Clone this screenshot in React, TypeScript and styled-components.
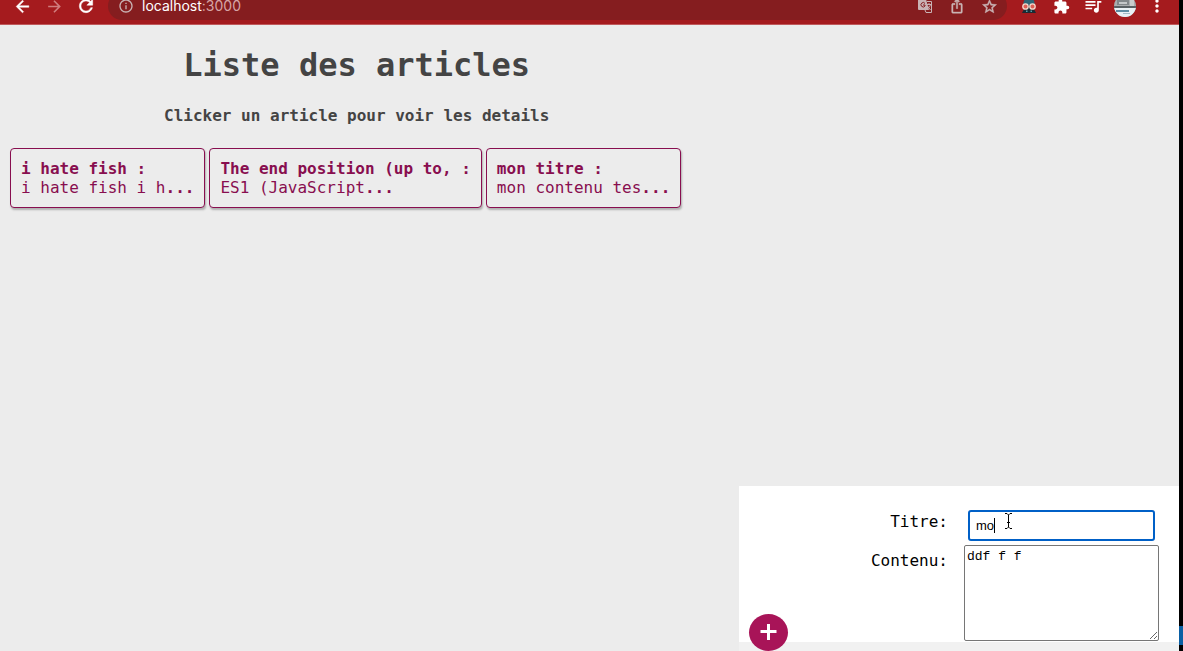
import React, { useState } from "react";
import styled, { createGlobalStyle } from "styled-components";
import {
  MdArrowBack,
  MdArrowForward,
  MdExtension,
  MdInfoOutline,
  MdIosShare,
  MdMoreVert,
  MdQueueMusic,
  MdRefresh,
  MdStarBorder,
} from "react-icons/md";

const mono = '"DejaVu Sans Mono", monospace';

const GlobalStyle = createGlobalStyle`
  * { box-sizing: border-box; }
  body {
    margin: 0;
    background: #ececec;
    font: 16px/19px ${mono};
  }
`;

const Screen = styled.div`
  display: flex;
  min-height: 100vh;
`;

const Browser = styled.div`
  flex: 1;
  min-width: 0;
  display: flex;
  flex-direction: column;
`;

const Desktop = styled.div`
  width: 4px;
  background: linear-gradient(to top, #000 6px, #0a5fa3 6px, #0a5fa3 25px, #000 25px);
`;

const Toolbar = styled.header`
  display: flex;
  align-items: flex-end;
  gap: 6px;
  height: 25px;
  padding: 0 6px 4px;
  background: #a51b1e;
  border-bottom: 1px solid #c0595b;
`;

const ToolGroup = styled.div`
  display: flex;
  align-items: center;
  height: 28px;
`;

const ToolButton = styled.button<{ $color?: string; $bold?: boolean }>`
  display: flex;
  align-items: center;
  justify-content: center;
  width: 32px;
  height: 28px;
  padding: 0;
  border: 0;
  background: none;
  color: ${(p) => p.$color ?? "#fff"};

  svg {
    stroke-width: ${(p) => (p.$bold ? 0.6 : 0)};
  }

  svg > path[fill="none"] {
    stroke: none;
  }
`;

const AddressBar = styled.div`
  flex: 1;
  display: flex;
  align-items: center;
  height: 28px;
  padding: 0 2px 0 10px;
  gap: 8px;
  border-radius: 14px;
  background: #851d1f;
  color: #c9b3b4;
`;

const Url = styled.div`
  flex: 1;
  font: 14px/12px Inter, sans-serif;
  color: #d7a5a6;
`;

const Host = styled.span`
  color: #fff;
`;

const Articles = styled.main`
  width: calc(60% - 14px);
  margin-left: 10px;
  padding-top: 20px;
  color: #444;
`;

const Title = styled.h1`
  margin: 0;
  font-size: 32px;
  line-height: 40px;
  text-align: center;
`;

const Subtitle = styled.h2`
  margin: 21px 0 23px;
  font-size: 16px;
  line-height: 19px;
  text-align: center;
`;

const CardList = styled.div`
  display: flex;
  flex-wrap: wrap;
  gap: 4px;
`;

const Card = styled.button`
  padding: 10px;
  border: 1px solid #880e4f;
  border-radius: 4px;
  box-shadow: 1px 2px 2px #b0b0b0;
  background: #ececec;
  color: #880e4f;
  font: 16px/19px ${mono};
  text-align: left;
`;

const CardTitle = styled.strong`
  display: block;
`;

const Editor = styled.form`
  position: relative;
  width: 440px;
  margin: auto 0 0 auto;
  padding-bottom: 9px;
  background: #f1f1f1;
`;

const Fields = styled.div`
  display: grid;
  grid-template-columns: 1fr 195px;
  column-gap: 16px;
  row-gap: 4px;
  padding: 24px 20px 1px 0;
  background: #fff;
`;

const Label = styled.label<{ $top: number }>`
  padding-top: ${(p) => p.$top}px;
  text-align: right;
  color: #000;
`;

const InputWrap = styled.div`
  position: relative;
  padding: 0 4px;
`;

const TextInput = styled.input`
  display: block;
  width: 100%;
  height: 31px;
  padding: 0 6px;
  border: 2px solid #0060c7;
  border-radius: 3px;
  outline: none;
  background: #fff;
  color: #000;
  font: 13px "Liberation Sans", Arial, sans-serif;
`;

const Caret = styled.span`
  position: absolute;
  left: 30px;
  top: 8px;
  width: 1px;
  height: 15px;
  background: #000;
`;

const Pointer = styled.svg`
  position: absolute;
  left: 40px;
  top: 3px;
`;

const TextArea = styled.textarea`
  display: block;
  width: 100%;
  height: 96px;
  padding: 3px 2px;
  border: 1px solid #767676;
  border-radius: 2px;
  background: #fff;
  color: #000;
  font: 13px/16px "Liberation Mono", monospace;
`;

const AddButton = styled.button`
  position: absolute;
  left: 10px;
  bottom: 0;
  display: grid;
  place-items: center;
  width: 39px;
  height: 37px;
  padding: 0;
  border: 0;
  border-radius: 50%;
  background: #a81458;
`;

const articles = [
  { title: "i hate fish", excerpt: "i hate fish i h" },
  { title: "The end position (up to,", excerpt: "ES1 (JavaScript" },
  { title: "mon titre", excerpt: "mon contenu tes" },
];

const TranslateIcon = () => (
  <svg width="14" height="14" viewBox="0 0 14 14" aria-hidden="true">
    <path d="M1 0h7l3 11H1a1 1 0 0 1-1-1V1a1 1 0 0 1 1-1z" fill="#c9b3b4" />
    <g fill="none" strokeWidth="1">
      <path d="M7 4.500A2.200 2.200 0 1 0 7 7V6H5" stroke="#851d1f" />
      <path
        d="M9 2.500h4.500v11H8L7 11M9 5.500h4M11 4v1.500M12.500 5.500c-.5 2-1.500 3-3 4M9.500 7l3 4"
        stroke="#c9b3b4"
      />
    </g>
  </svg>
);

const HelmetIcon = () => (
  <svg width="16" height="20" viewBox="0 0 16 20" aria-hidden="true">
    <path d="M2.500 10V7a5.500 5.500 0 0 1 11 0v3z" fill="#2f6575" />
    <path d="M3 9h10v4l2 4H1l2-4z" fill="#1c2b33" />
    <circle cx="4.500" cy="10.500" r="2.700" fill="#dd5f55" stroke="#f4d9cd" strokeWidth="1.300" />
    <circle cx="11.500" cy="10.500" r="2.700" fill="#dd5f55" stroke="#f4d9cd" strokeWidth="1.300" />
    <path d="M5 14.500h1.500V16H5zM9.500 14.500H11V16H9.500z" fill="#58a0ad" />
  </svg>
);

const Avatar = () => (
  <svg width="22" height="22" viewBox="0 0 22 22" aria-hidden="true">
    <clipPath id="avatar">
      <circle cx="11" cy="11" r="11" />
    </clipPath>
    <g clipPath="url(#avatar)">
      <path d="M0 0h22v22H0z" fill="#a9adaf" />
      <path d="M3 5h12v5H3z" fill="#81878a" />
      <path d="M5 7h8v2H5z" fill="#c3c7c9" />
      <path d="M16 4h4v7h-4z" fill="#c9cccd" />
      <path d="M0 11h22v2H0z" fill="#596165" />
      <path d="M0 13h22v9H0z" fill="#e9f0f4" />
      <path d="M2 15h13v2H2z" fill="#5d8ca2" />
      <path d="M9 18h7v1H9z" fill="#a3bcc8" />
    </g>
  </svg>
);

export default function App() {
  const [title, setTitle] = useState("mo");
  const [content, setContent] = useState("ddf f f");

  return (
    <Screen>
      <GlobalStyle />
      <Browser>
        <Toolbar>
          <ToolGroup>
            <ToolButton aria-label="Back" $bold><MdArrowBack size={19} /></ToolButton>
            <ToolButton aria-label="Forward" $color="#d07d7e"><MdArrowForward size={19} /></ToolButton>
            <ToolButton aria-label="Reload" $bold><MdRefresh size={20} /></ToolButton>
          </ToolGroup>
          <AddressBar>
            <MdInfoOutline size={16} />
            <Url><Host>localhost</Host>:3000</Url>
            <ToolGroup>
              <ToolButton aria-label="Translate"><TranslateIcon /></ToolButton>
              <ToolButton aria-label="Share" $color="#c9b3b4" $bold><MdIosShare size={16} /></ToolButton>
              <ToolButton aria-label="Bookmark" $color="#c9b3b4" $bold><MdStarBorder size={17} /></ToolButton>
            </ToolGroup>
          </AddressBar>
          <ToolGroup>
            <ToolButton aria-label="Helmet extension"><HelmetIcon /></ToolButton>
            <ToolButton aria-label="Extensions"><MdExtension size={17} /></ToolButton>
            <ToolButton aria-label="Media"><MdQueueMusic size={20} /></ToolButton>
            <ToolButton aria-label="Profile"><Avatar /></ToolButton>
            <ToolButton aria-label="Menu"><MdMoreVert size={20} /></ToolButton>
          </ToolGroup>
        </Toolbar>

        <Articles>
          <Title>Liste des articles</Title>
          <Subtitle>Clicker un article pour voir les details</Subtitle>
          <CardList>
            {articles.map((a) => (
              <Card key={a.title}>
                <CardTitle>{a.title} :</CardTitle>
                {a.excerpt}<b>...</b>
              </Card>
            ))}
          </CardList>
        </Articles>

        <Editor onSubmit={(e) => e.preventDefault()}>
          <Fields>
            <Label htmlFor="titre" $top={2}>Titre:</Label>
            <InputWrap>
              <TextInput id="titre" value={title} onChange={(e) => setTitle(e.target.value)} />
              <Caret />
              <Pointer width="9" height="16" viewBox="0 0 9 16" fill="none" stroke="#000" aria-hidden="true">
                <path d="M1 .5h2l1.500 1.500L6 .5h2M4.500 2v12M1 15.500h2L4.500 14 6 15.500h2M3 9.500h3" />
              </Pointer>
            </InputWrap>
            <Label htmlFor="contenu" $top={6}>Contenu:</Label>
            <TextArea id="contenu" value={content} onChange={(e) => setContent(e.target.value)} />
          </Fields>
          <AddButton type="submit" aria-label="Ajouter">
            <svg width="17" height="17" viewBox="0 0 17 17" aria-hidden="true">
              <path d="M8.500 0v16M.5 7.500h16" stroke="#fff" strokeWidth="3" />
            </svg>
          </AddButton>
        </Editor>
      </Browser>
      <Desktop />
    </Screen>
  );
}
